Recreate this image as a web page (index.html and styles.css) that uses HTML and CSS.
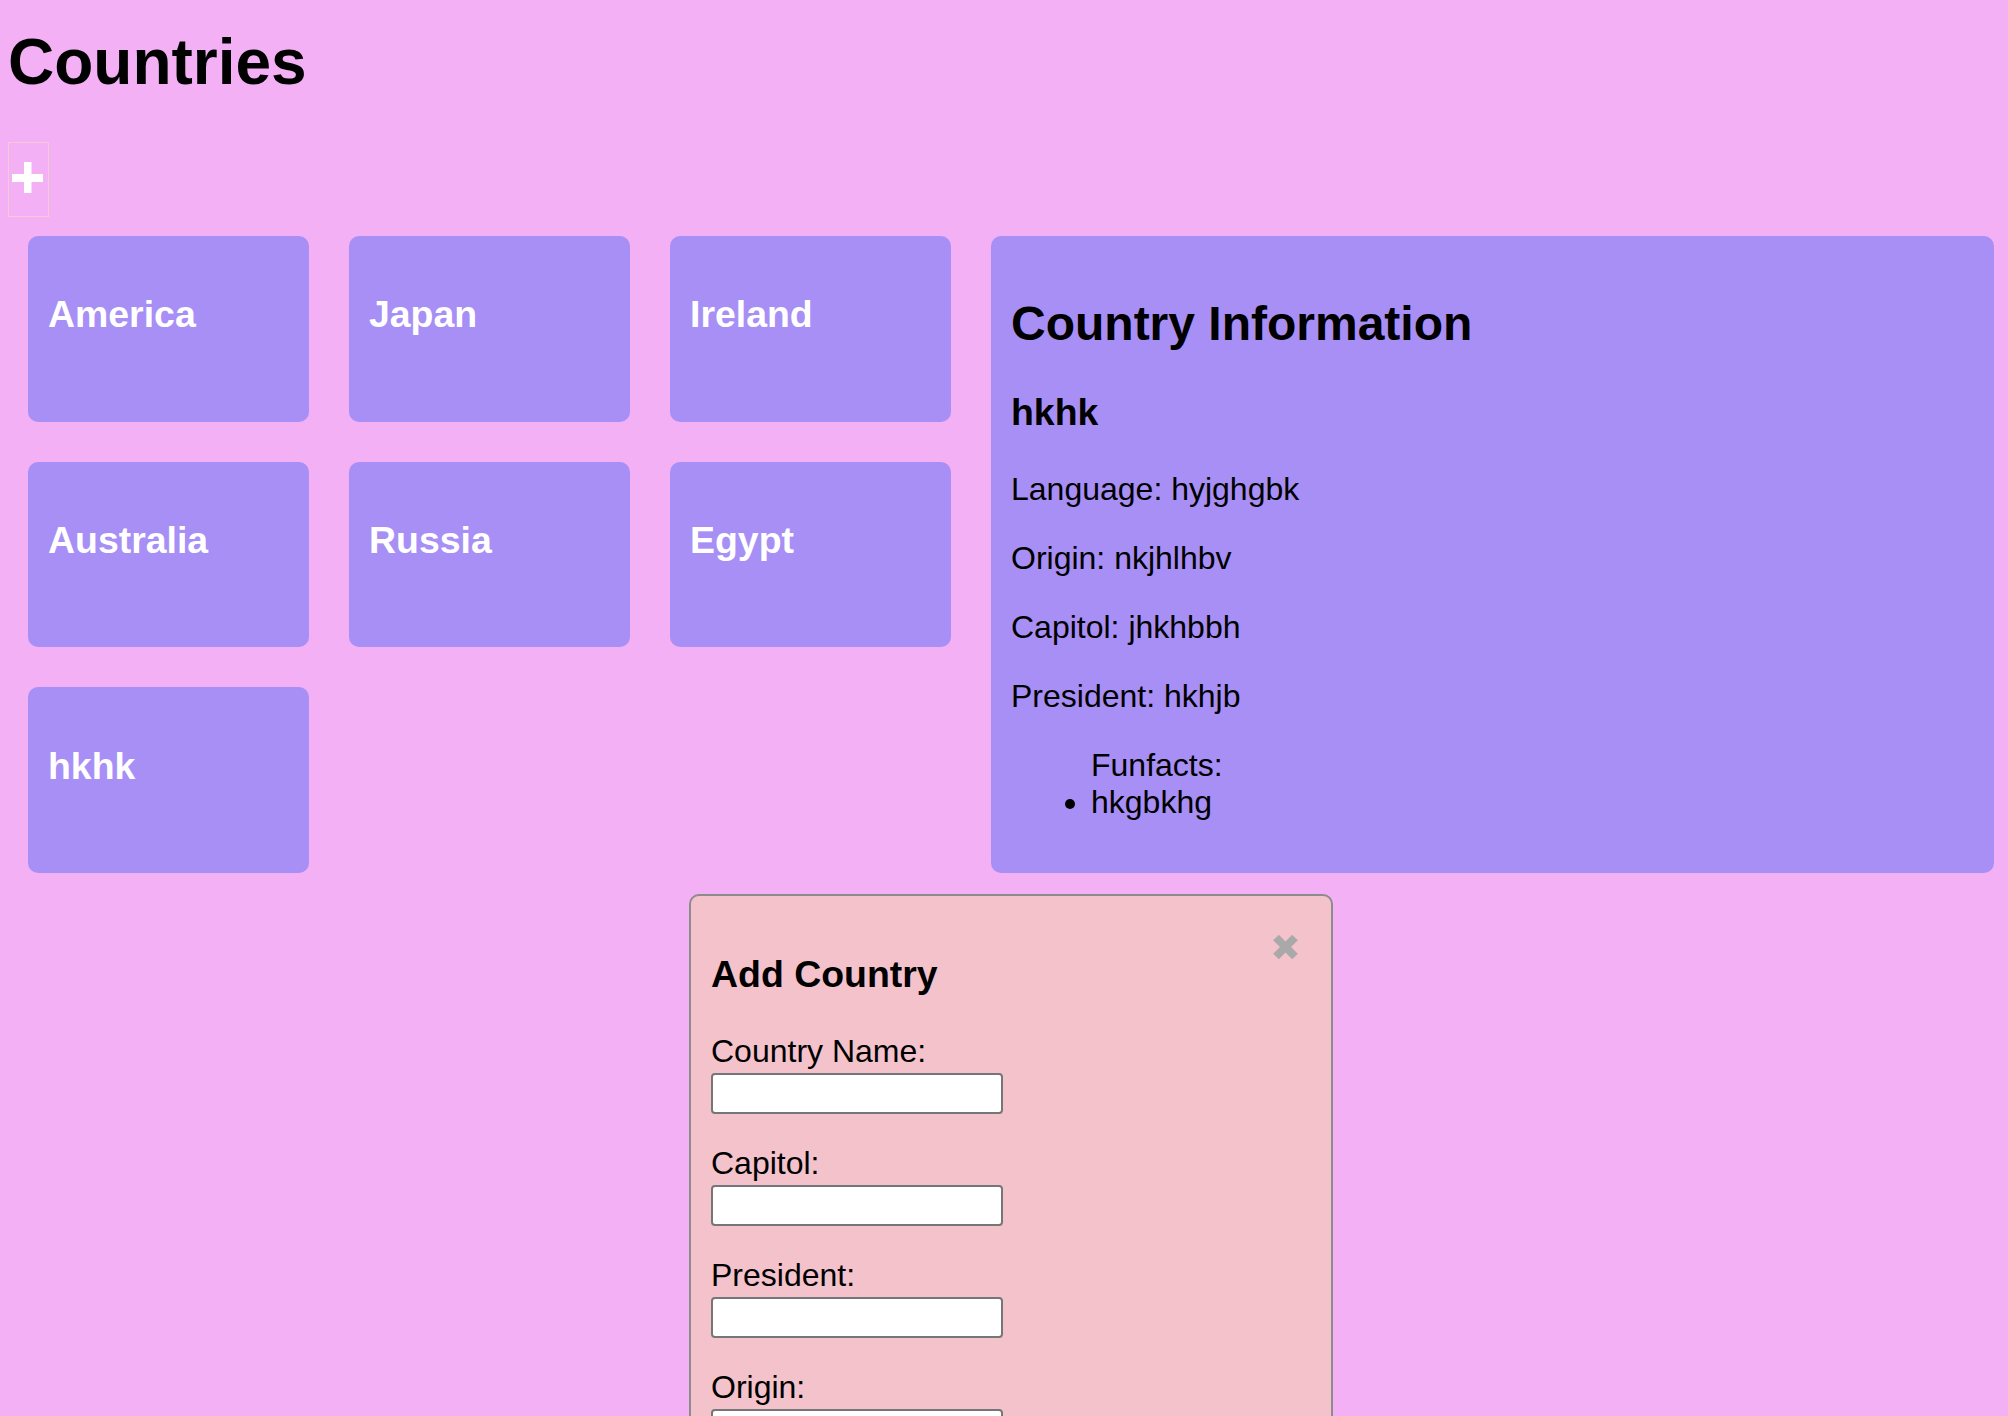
FILE: index.html
```html
<!DOCTYPE html>
<html lang="en">
<head>
<meta charset="utf-8">
<title>Countries</title>
<link rel="stylesheet" href="styles.css">
</head>
<body>
<h1 class="page-title">Countries</h1>
<button class="add-btn" type="button" aria-label="Add country">
  <svg class="add-icon" width="31" height="31" viewBox="0 0 31 31" aria-hidden="true">
    <rect x="0" y="12" width="31" height="8" fill="#ffffff"/>
    <rect x="12" y="0" width="7.5" height="31" fill="#ffffff"/>
  </svg>
</button>
<div class="layout">
  <div class="card-grid">
    <div class="card"><h3 class="card-title">America</h3></div>
    <div class="card"><h3 class="card-title">Japan</h3></div>
    <div class="card"><h3 class="card-title">Ireland</h3></div>
    <div class="card"><h3 class="card-title">Australia</h3></div>
    <div class="card"><h3 class="card-title">Russia</h3></div>
    <div class="card"><h3 class="card-title">Egypt</h3></div>
    <div class="card"><h3 class="card-title">hkhk</h3></div>
  </div>
  <section class="info-panel">
    <h2 class="info-title">Country Information</h2>
    <h3 class="info-name">hkhk</h3>
    <p class="info-line">Language: hyjghgbk</p>
    <p class="info-line">Origin: nkjhlhbv</p>
    <p class="info-line">Capitol: jhkhbbh</p>
    <p class="info-line">President: hkhjb</p>
    <ul class="fact-list">
      <li class="fact-head">Funfacts:</li>
      <li class="fact-item">hkgbkhg</li>
    </ul>
  </section>
</div>
<div class="modal">
  <span class="modal-close" aria-label="Close">
    <svg width="27" height="28" viewBox="0 0 27 28" aria-hidden="true">
      <line x1="4" y1="4.5" x2="23" y2="23.5" stroke="#a9a9a9" stroke-width="8"/>
      <line x1="23" y1="4.5" x2="4" y2="23.5" stroke="#a9a9a9" stroke-width="8"/>
    </svg>
  </span>
  <h3 class="modal-title">Add Country</h3>
  <form class="modal-form">
    <label class="field-label">Country Name:</label>
    <input class="field-input" type="text">
    <label class="field-label">Capitol:</label>
    <input class="field-input" type="text">
    <label class="field-label">President:</label>
    <input class="field-input" type="text">
    <label class="field-label">Origin:</label>
    <input class="field-input" type="text">
    <label class="field-label">Language:</label>
    <input class="field-input" type="text">
    <label class="field-label">Funfacts:</label>
    <input class="field-input" type="text">
  </form>
</div>
</body>
</html>
```

FILE: styles.css
```css
html, body {
  margin: 0;
}

body {
  background: #f3b0f5;
  font-family: "Liberation Sans", Arial, Helvetica, sans-serif;
  font-size: 32px;
  color: #000;
  padding: 0 8px 40px;
}

.page-title {
  font-size: 64px;
  font-weight: bold;
  line-height: normal;
  margin: 25px 0 43px;
}

.add-btn {
  display: flex;
  align-items: flex-start;
  width: 41px;
  height: 75px;
  box-sizing: border-box;
  padding: 19px 0 0 3px;
  margin: 0 0 19px;
  background: transparent;
  border: 1px solid #f6c8d8;
  cursor: pointer;
}

.add-icon {
  display: block;
}

.layout {
  display: flex;
  align-items: stretch;
  gap: 40px;
  padding: 0 6px 0 20px;
}

.card-grid {
  display: grid;
  grid-template-columns: repeat(3, 281px);
  grid-auto-rows: 1fr;
  gap: 40px;
  flex: none;
}

.card {
  background: #a78ff6;
  border-radius: 10px;
  padding: 20px;
  box-sizing: border-box;
}

.card-title {
  font-size: 37.44px;
  font-weight: bold;
  color: #fff;
  line-height: normal;
  margin: 37.44px 0;
}

.info-panel {
  flex: 1;
  align-self: flex-start;
  background: #a78ff6;
  border-radius: 10px;
  padding: 20px;
}

.info-title {
  font-size: 48px;
  font-weight: bold;
  line-height: normal;
  margin: 39.84px 0;
}

.info-name {
  font-size: 37.44px;
  font-weight: bold;
  line-height: normal;
  margin: 37.44px 0;
}

.info-line {
  margin: 32px 0;
  line-height: normal;
}

.fact-list {
  margin: 32px 0;
  padding-left: 80px;
  line-height: normal;
}

.fact-head {
  list-style: none;
}

.modal {
  position: relative;
  box-sizing: border-box;
  width: 644px;
  margin: 21px 0 0 681px;
  padding: 19px 20px 20px;
  background: #f4c2cb;
  border: 2px solid #8c8c8c;
  border-radius: 10px;
}

.modal-close {
  position: absolute;
  top: 37px;
  right: 32px;
  width: 27px;
  height: 28px;
  cursor: pointer;
}

.modal-close svg {
  display: block;
}

.modal-title {
  font-size: 37.44px;
  font-weight: bold;
  line-height: normal;
  margin: 37.44px 0;
}

.modal-form {
  display: flex;
  flex-direction: column;
  align-items: flex-start;
}

.field-label {
  display: block;
  font-size: 32px;
  line-height: normal;
}

.field-input {
  display: block;
  box-sizing: border-box;
  width: 292px;
  height: 41px;
  margin: 3px 0 31px;
  padding: 0 4px;
  border: 2px solid #767676;
  border-radius: 4px;
  background: #fff;
  font: inherit;
  font-size: 26px;
}
```
